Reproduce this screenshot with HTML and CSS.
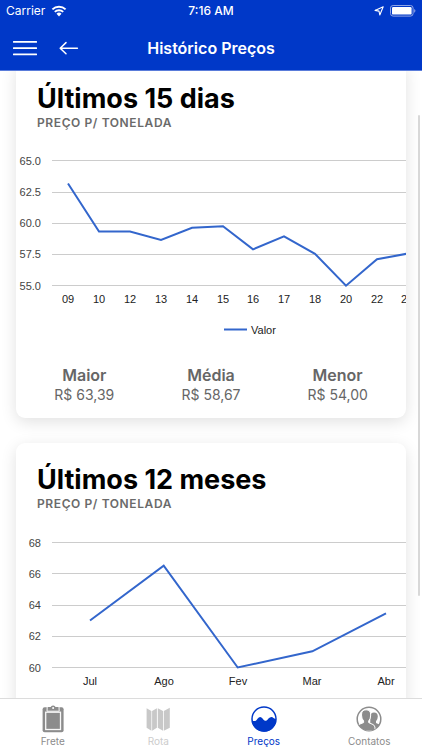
FILE: index.html
```html
<!DOCTYPE html>
<html lang="pt-BR">
<head>
<meta charset="utf-8">
<meta name="viewport" content="width=device-width, initial-scale=1">
<title>Histórico Preços</title>
<link rel="stylesheet" href="styles.css">
</head>
<body>
<div class="app">
  <header class="top">
    <div class="status">
      <div class="status-left">
        <span>Carrier</span>
        <svg width="16" height="12" viewBox="0 0 16 12" aria-hidden="true"><g fill="none" stroke="#fff" stroke-width="1.9"><path d="M1.4 4.4A9.4 9.4 0 0 1 14.6 4.4"/><path d="M3.8 6.9A6 6 0 0 1 12.2 6.9"/></g><path d="M8 11.4 5.5 8.8A3.6 3.6 0 0 1 10.5 8.8Z" fill="#fff"/></svg>
      </div>
      <span class="clock">7:16 AM</span>
      <div class="status-right">
        <svg width="10" height="10" viewBox="0 0 10 10" aria-hidden="true"><path d="M9.2.8 5.8 9 5 5.1 1 4.4Z" fill="none" stroke="#fff" stroke-width="1.1" stroke-linejoin="round"/></svg>
        <svg width="26" height="12" viewBox="0 0 26 12" aria-hidden="true"><rect x=".5" y=".5" width="22.6" height="10.6" rx="2.6" fill="none" stroke="#8fa5e6"/><rect x="2" y="2" width="19.6" height="7.6" rx="1.2" fill="#fff"/><path d="M24.2 3.9Q25.4 4.4 25.4 5.8T24.2 7.7Z" fill="#8fa5e6"/></svg>
      </div>
    </div>
    <div class="nav">
      <div class="nav-actions">
        <button class="icon-button" type="button" aria-label="Menu"><svg width="24" height="16" viewBox="0 0 24 16"><path d="M.7 1.8H23.3M.7 8.1H23.3M.7 14.4H23.3" stroke="#fff" stroke-width="1.8" stroke-linecap="round"/></svg></button>
        <button class="icon-button" type="button" aria-label="Voltar"><svg width="20" height="16" viewBox="0 0 20 16"><path d="M18.4 8.2H1.4M7 2.6 1.2 8.2 7 13.8" fill="none" stroke="#fff" stroke-width="1.5" stroke-linecap="round" stroke-linejoin="round"/></svg></button>
      </div>
      <h1 class="nav-title">Histórico Preços</h1>
    </div>
  </header>

  <main class="content">
    <div class="cards">
      <section class="card">
        <div class="card-head">
          <h2 class="card-title">Últimos 15 dias</h2>
          <p class="card-sub">PREÇO P/ TONELADA</p>
        </div>
        <div class="chart">
          <svg width="440" height="234" viewBox="0 1 440 234" role="img" aria-label="Preço por tonelada, últimos 15 dias">
            <path class="grid" d="M36 30.5H440M36 62.5H440M36 93.5H440M36 124.5H440M36 155.5H440"/>
            <polyline class="line" points="52,53.5 83,101.5 114,101.5 145,110 176,97.7 207,96.3 237,119.3 268,106.3 299,123.8 330,155.7 361,129.3 392,123.5"/>
            <g class="axis-y"><text x="25" y="35">65.0</text><text x="25" y="66">62.5</text><text x="25" y="97">60.0</text><text x="25" y="128">57.5</text><text x="25" y="160">55.0</text></g>
            <g class="axis-x"><text x="52" y="173">09</text><text x="83" y="173">10</text><text x="114" y="173">12</text><text x="145" y="173">13</text><text x="176" y="173">14</text><text x="207" y="173">15</text><text x="237" y="173">16</text><text x="268" y="173">17</text><text x="299" y="173">18</text><text x="330" y="173">20</text><text x="361" y="173">22</text><text x="391" y="173">23</text></g>
            <path class="line" d="M208 199.5H231"/>
            <text class="legend" x="235" y="204">Valor</text>
          </svg>
        </div>
        <dl class="stats">
          <div class="stat"><dt>Maior</dt><dd>R$ 63,39</dd></div>
          <div class="stat"><dt>Média</dt><dd>R$ 58,67</dd></div>
          <div class="stat"><dt>Menor</dt><dd>R$ 54,00</dd></div>
        </dl>
      </section>

      <section class="card">
        <div class="card-head">
          <h2 class="card-title">Últimos 12 meses</h2>
          <p class="card-sub">PREÇO P/ TONELADA</p>
        </div>
        <div class="chart">
          <svg width="440" height="234" viewBox="0 2 440 234" role="img" aria-label="Preço por tonelada, últimos 12 meses">
            <path class="grid" d="M36 32.5H440M36 63.5H440M36 95.5H440M36 126.5H440M36 157.5H440"/>
            <polyline class="line" points="74,110.5 147.7,55.7 221.7,157.5 296.3,141.3 370,103.3"/>
            <g class="axis-y"><text x="25" y="37">68</text><text x="25" y="68">66</text><text x="25" y="99">64</text><text x="25" y="130">62</text><text x="25" y="162">60</text></g>
            <g class="axis-x"><text x="74" y="175">Jul</text><text x="148" y="175">Ago</text><text x="222" y="175">Fev</text><text x="296" y="175">Mar</text><text x="370" y="175">Abr</text></g>
          </svg>
        </div>
      </section>
    </div>
    <div class="scroll-thumb"></div>
  </main>

  <nav class="tabs">
    <a class="tab" href="#frete">
      <svg width="26" height="28" viewBox="0 0 26 28" aria-hidden="true"><rect x="2.6" y="2.2" width="21" height="25" rx="2" fill="#8c8c8c"/><path d="M7.2 2 7 6.2H19.2L19 2" fill="#8c8c8c" stroke="#f8f8f8" stroke-width="1"/><path d="M8.3 5V3H10.6Q10.6.5 13.1.5T15.6 3H17.9V5Z" fill="#8c8c8c"/><circle cx="13.1" cy="3" r="1" fill="#fff"/><rect x="5.7" y="7.2" width="14.8" height="17.3" fill="#8c8c8c" stroke="#f8f8f8" stroke-width="1.3"/></svg>
      <span>Frete</span>
    </a>
    <a class="tab tab-disabled" href="#rota">
      <svg width="26" height="28" viewBox="0 0 26 28" aria-hidden="true"><path d="M1.6 3.2 6.4 6V25.8L1.6 22.8ZM7.1 6 11.9 3.2V22.8L7.1 25.8ZM12.8 3.2 18 6V25.8L12.8 22.8ZM18.8 6 24.8 2.7V22.8L18.8 25.8Z" fill="#c8c8c8"/></svg>
      <span>Rota</span>
    </a>
    <a class="tab tab-active" href="#precos" aria-current="page">
      <svg width="26" height="28" viewBox="0 0 26 28" aria-hidden="true"><circle cx="13" cy="14" r="12" fill="#fff" stroke="#0038c8" stroke-width="1.5"/><path d="M1 15.4C4.2 17 5.1 15.6 6.5 13.7Q9.2 10.4 11.8 13.8C13.7 16.5 15.4 16.6 17.2 13.8Q20.4 10.5 22.5 13.1L25 14.3A12 12 0 0 1 1 15.4Z" fill="#0038c8"/></svg>
      <span>Preços</span>
    </a>
    <a class="tab" href="#contatos">
      <svg width="26" height="28" viewBox="0 0 26 28" aria-hidden="true"><defs><clipPath id="ring"><circle cx="13" cy="14" r="11.6"/></clipPath></defs><circle cx="13" cy="14" r="11.8" fill="#fff" stroke="#8c8c8c" stroke-width="1.5"/><g clip-path="url(#ring)" fill="#8c8c8c"><path d="M18 7.6Q21.8 7.6 21.8 11.4 21.7 14.6 20 16.2V17.9L25 20.2V26H14L14.4 12Q14.4 7.6 18 7.6Z"/><path d="M5.5 10Q5.5 4.8 10.1 4.8T14.7 10Q14.7 13.8 12.7 16V17.6L17.6 19.8Q19.4 21 19.2 26H1V20.2L7.6 17.6V16Q5.5 13.8 5.5 10Z" stroke="#fff" stroke-width="1"/></g></svg>
      <span>Contatos</span>
    </a>
  </nav>
</div>
</body>
</html>
```

FILE: styles.css
```css
* {
  box-sizing: border-box;
}

body {
  margin: 0;
  font-family: Inter, "Liberation Sans", sans-serif;
  background: #fff;
}

h1, h2, p, dl, dd {
  margin: 0;
}

svg {
  display: block;
  flex: none;
}

.app {
  display: flex;
  flex-direction: column;
  height: 100vh;
}

.top {
  flex: none;
  color: #fff;
  background: #0038c8;
  border-bottom: 1px solid #5a7cda;
}

.status {
  display: grid;
  grid-template-columns: 1fr auto 1fr;
  align-items: center;
  height: 22px;
  padding: 0 6px;
  font-size: 12px;
  line-height: 16px;
}

.status-left,
.status-right {
  display: flex;
  align-items: center;
  gap: 6px;
}

.status-right {
  justify-content: flex-end;
}

.clock {
  font-weight: 500;
}

.nav {
  display: grid;
  grid-template-columns: 1fr auto 1fr;
  align-items: center;
  height: 48px;
  padding: 4px 13px 0;
}

.nav-actions {
  display: flex;
  gap: 22px;
}

.icon-button {
  padding: 0;
  border: 0;
  background: none;
}

.nav-title {
  font-size: 16px;
  line-height: 20px;
  font-weight: 600;
}

.content {
  position: relative;
  flex: 1;
  min-height: 0;
  overflow: hidden;
}

.cards {
  display: flex;
  flex-direction: column;
  gap: 25px;
  margin: -9px 16px 24px;
}

.card {
  border-radius: 9px;
  background: #fff;
  box-shadow: 0 4px 16px rgba(0, 0, 0, 0.12);
}

.card-head {
  padding: 21px 21px 0;
}

.card-title {
  font-size: 27px;
  line-height: 32px;
  font-weight: 700;
  color: #000;
}

.card-sub {
  font-size: 12px;
  line-height: 16px;
  font-weight: 600;
  letter-spacing: 0.05em;
  color: #6a6a6a;
}

.chart {
  overflow: hidden;
  font-family: "Liberation Sans", Arial, sans-serif;
  font-size: 11px;
}

.grid {
  stroke: #ccc;
}

.line {
  fill: none;
  stroke: #3366cc;
  stroke-width: 2;
}

.axis-y {
  fill: #444;
  text-anchor: end;
}

.axis-x {
  fill: #222;
  text-anchor: middle;
}

.legend {
  fill: #222;
}

.stats {
  display: grid;
  grid-template-columns: repeat(3, 1fr);
  padding: 0 5px 13px;
  color: #666;
  text-align: center;
  line-height: 20px;
}

.stat dt {
  font-size: 16px;
  font-weight: 600;
}

.stat dd {
  font-size: 14px;
}

.scroll-thumb {
  position: absolute;
  top: 44px;
  right: 2px;
  bottom: 102px;
  width: 2px;
  border-radius: 1px;
  background: #d8d8d8;
}

.tabs {
  display: grid;
  grid-template-columns: repeat(4, 1fr);
  flex: none;
  height: 52px;
  padding-top: 6px;
  border-top: 1px solid #dcdcdc;
  background: #fff;
}

.tab {
  display: flex;
  flex-direction: column;
  align-items: center;
  gap: 1px;
  font-size: 10px;
  line-height: 14px;
  color: #8c8c8c;
  text-decoration: none;
}

.tab-disabled {
  color: #ccc;
}

.tab-active {
  color: #0038c8;
}
```
